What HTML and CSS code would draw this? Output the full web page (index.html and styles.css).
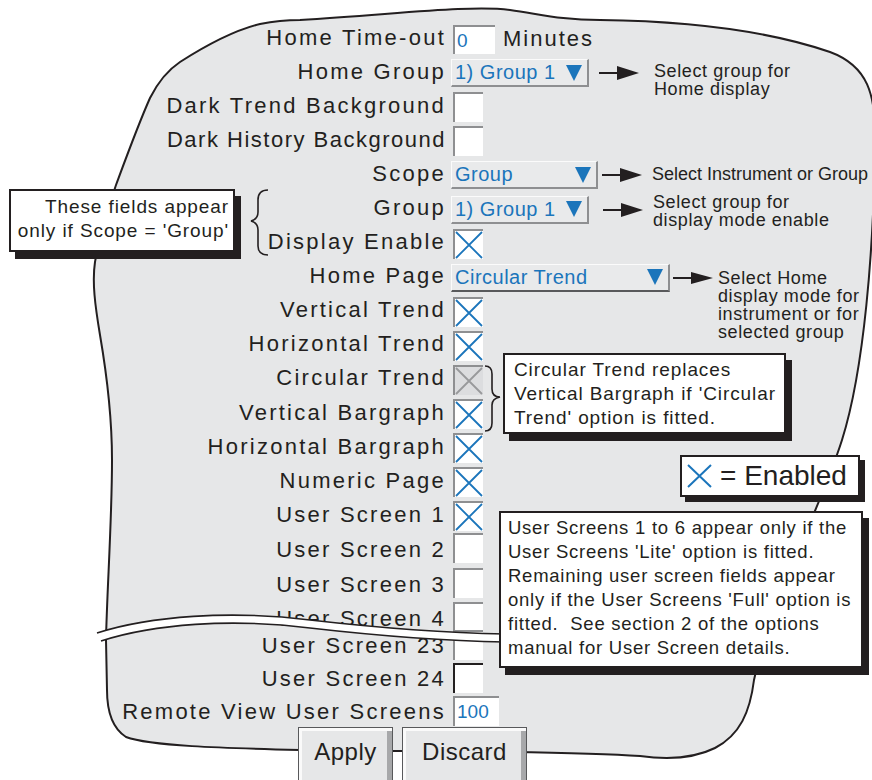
FILE: index.html
```html
<!DOCTYPE html>
<html lang="en">
<head>
  <meta charset="UTF-8">
  <title>Home Configuration</title>
  <link rel="stylesheet" href="styles.css">
</head>
<body>
  <div class="sheet">
    <!-- panel outline, drawn behind the form -->
    <svg class="outline" width="872" height="780" viewBox="0 0 872 780">
      <path class="blob" d="M300,20 C400,14 470,5 510,10 C540,14 560,20 600,20 C680,21 760,28 830,52 C868,66 876,95 875,140 C874,250 864,370 842,440 C826,490 805,530 792,570 C775,620 760,650 754,680 C750,712 740,735 715,748 C695,758 670,760 640,756 C560,750 400,752 300,750 C220,748 150,746 126,737 C112,728 107,712 107,690 L106,640 C107,590 112,520 112,460 C112,410 106,370 100,335 C95,305 92,282 95,262 C100,235 108,208 116,185 C126,158 138,125 150,98 C157,84 165,72 180,62 C205,46 235,30 260,24 C275,21 290,20 300,20 Z"/>
    </svg>

    <div class="form">
      <div class="row">
        <span class="label">Home Time-out</span>
        <span class="entry">0</span>
        <span class="unit">Minutes</span>
      </div>
      <div class="row row-home-group">
        <span class="label">Home Group</span>
        <span class="select select-group">1) Group 1
          <svg width="16" height="16" viewBox="0 0 16 16"><polygon points="0,0 16,0 8,16"/></svg>
        </span>
        <svg class="arrow" width="40" height="16" viewBox="0 0 40 16"><line x1="0" y1="8" x2="20" y2="8"/><polygon points="18,1 40,8 18,15"/></svg>
        <span class="note">Select group for<br>Home display</span>
      </div>
      <div class="row">
        <span class="label">Dark Trend Background</span>
        <span class="check"></span>
      </div>
      <div class="row">
        <span class="label snug">Dark History Background</span>
        <span class="check"></span>
      </div>
      <div class="row row-scope">
        <span class="label">Scope</span>
        <span class="select select-scope">Group
          <svg width="16" height="16" viewBox="0 0 16 16"><polygon points="0,0 16,0 8,16"/></svg>
        </span>
        <svg class="arrow" width="40" height="16" viewBox="0 0 40 16"><line x1="0" y1="8" x2="20" y2="8"/><polygon points="18,1 40,8 18,15"/></svg>
        <span class="note">Select Instrument or Group</span>
      </div>
      <div class="row row-group">
        <span class="label">Group</span>
        <span class="select select-group">1) Group 1
          <svg width="16" height="16" viewBox="0 0 16 16"><polygon points="0,0 16,0 8,16"/></svg>
        </span>
        <svg class="arrow" width="40" height="16" viewBox="0 0 40 16"><line x1="0" y1="8" x2="20" y2="8"/><polygon points="18,1 40,8 18,15"/></svg>
        <span class="note">Select group for<br>display mode enable</span>
      </div>
      <div class="row">
        <span class="label">Display Enable</span>
        <span class="check"><svg width="28" height="28" viewBox="0 0 28 28"><path d="M1 1L27 27M27 1L1 27"/></svg></span>
      </div>
      <div class="row row-home-page">
        <span class="label">Home Page</span>
        <span class="select select-page">Circular Trend
          <svg width="16" height="16" viewBox="0 0 16 16"><polygon points="0,0 16,0 8,16"/></svg>
        </span>
        <svg class="arrow" width="40" height="16" viewBox="0 0 40 16"><line x1="0" y1="8" x2="20" y2="8"/><polygon points="18,2 40,8 18,14"/></svg>
        <span class="note">Select Home<br>display mode for<br>instrument or for<br>selected group</span>
      </div>
      <div class="row">
        <span class="label">Vertical Trend</span>
        <span class="check"><svg width="28" height="28" viewBox="0 0 28 28"><path d="M1 1L27 27M27 1L1 27"/></svg></span>
      </div>
      <div class="row">
        <span class="label">Horizontal Trend</span>
        <span class="check"><svg width="28" height="28" viewBox="0 0 28 28"><path d="M1 1L27 27M27 1L1 27"/></svg></span>
      </div>
      <div class="row">
        <span class="label">Circular Trend</span>
        <span class="check off"><svg width="28" height="28" viewBox="0 0 28 28"><path d="M1 1L27 27M27 1L1 27"/></svg></span>
      </div>
      <div class="row">
        <span class="label">Vertical Bargraph</span>
        <span class="check"><svg width="28" height="28" viewBox="0 0 28 28"><path d="M1 1L27 27M27 1L1 27"/></svg></span>
      </div>
      <div class="row">
        <span class="label">Horizontal Bargraph</span>
        <span class="check"><svg width="28" height="28" viewBox="0 0 28 28"><path d="M1 1L27 27M27 1L1 27"/></svg></span>
      </div>
      <div class="row">
        <span class="label">Numeric Page</span>
        <span class="check"><svg width="28" height="28" viewBox="0 0 28 28"><path d="M1 1L27 27M27 1L1 27"/></svg></span>
      </div>
      <div class="row">
        <span class="label">User Screen 1</span>
        <span class="check"><svg width="28" height="28" viewBox="0 0 28 28"><path d="M1 1L27 27M27 1L1 27"/></svg></span>
      </div>
      <div class="row low">
        <span class="label">User Screen 2</span>
        <span class="check"></span>
      </div>
      <div class="row low">
        <span class="label">User Screen 3</span>
        <span class="check"></span>
      </div>
      <div class="row low">
        <span class="label">User Screen 4</span>
        <span class="check"></span>
      </div>
      <div class="row low tight resume">
        <span class="label">User Screen 23</span>
        <span class="check"></span>
      </div>
      <div class="row low tight">
        <span class="label">User Screen 24</span>
        <span class="check focus"></span>
      </div>
      <div class="row low tight">
        <span class="label">Remote View User Screens</span>
        <span class="entry wide">100</span>
      </div>
      <div class="actions">
        <div class="btn btn-apply">Apply</div>
        <div class="btn btn-discard">Discard</div>
      </div>
    </div>

    <!-- braces and the page break, drawn over the form -->
    <svg class="marks" width="872" height="780" viewBox="0 0 872 780">
      <path class="brace" d="M268,190 C261,190 258,193 258,200 L258,212 C258,218 255,220 251,221 C255,222 258,224 258,230 L258,246 C258,252 261,255 268,255"/>
      <path class="brace" d="M485,366 C490,366 492,369 492,374 L492,389 C492,394 495,397 500,397 C495,398 492,400 492,405 L492,423 C492,428 490,431 485,431"/>
      <path class="gap" d="M97,633 C150,616 230,610 310,620 C380,628 450,633 505,634 L505,642 C450,641 380,636 310,628 C230,618 154,624 101,641 Z"/>
      <path class="gap-edge" d="M97,633 C150,616 230,610 310,620 C380,628 450,633 505,634"/>
      <path class="gap-edge" d="M101,641 C154,624 230,618 310,628 C380,636 450,641 505,642"/>
    </svg>

    <div class="callout callout-scope">These fields appear<br>only if Scope = 'Group'</div>
    <div class="callout callout-circular">Circular Trend replaces<br>Vertical Bargraph if 'Circular<br>Trend' option is fitted.</div>
    <div class="callout callout-screens">User Screens 1 to 6 appear only if the<br>User Screens 'Lite' option is fitted.<br>Remaining user screen fields appear<br>only if the User Screens 'Full' option is<br>fitted.&nbsp; See section 2 of the options<br>manual for User Screen details.</div>
    <div class="callout legend">
      <svg width="25" height="24" viewBox="0 0 25 24"><path d="M1 1L24 23M24 1L1 23"/></svg>
      <span>= Enabled</span>
    </div>
  </div>
</body>
</html>
```

FILE: styles.css
```css
body {
  margin: 0;
  font-family: "Liberation Sans", Arial, sans-serif;
  color: #231f20;
  background-color: white;
}

.sheet {
  position: relative;
  width: 872px;
  height: 780px;
  overflow: hidden;
}

.outline,
.marks {
  position: absolute;
  left: 0;
  top: 0;
}

.blob {
  fill: #e6e7e8;
  stroke: #231f20;
  stroke-width: 2;
}

.brace {
  fill: none;
  stroke: #231f20;
  stroke-width: 1.6;
}

.gap {
  fill: white;
}

.gap-edge {
  fill: none;
  stroke: #231f20;
  stroke-width: 1.6;
}

/* Form rows */
.form {
  position: relative;
  padding-top: 22px;
}

.row {
  display: flex;
  align-items: center;
  height: 34.1px;
}

.row.tight {
  height: 33px;
}

.row.resume {
  margin-top: -6px;
}

.label {
  flex: none;
  width: 446px;
  box-sizing: border-box;
  padding-bottom: 3px;
  text-align: right;
  font-size: 22px;
  letter-spacing: 2.25px;
  white-space: nowrap;
}

.label.snug {
  letter-spacing: 1.5px;
}

.row.low .label {
  padding-bottom: 0;
}

.row.low .check,
.row.low .entry {
  align-self: flex-start;
}

.unit {
  margin-left: 8px;
  font-size: 22px;
  letter-spacing: 2px;
}

.entry {
  width: 42px;
  height: 29px;
  margin-left: 7px;
  box-sizing: border-box;
  padding-left: 2px;
  background: white;
  border-top: 2px solid #8e8f91;
  border-left: 2px solid #8e8f91;
  color: #1b75bb;
  font-size: 19px;
  line-height: 27px;
}

.entry.wide {
  width: 46px;
  height: 30px;
}

.check {
  flex: none;
  width: 30px;
  height: 30px;
  margin-left: 7px;
  box-sizing: border-box;
  background: white;
  border-top: 2px solid #8e8f91;
  border-left: 2px solid #8e8f91;
}

.check svg {
  display: block;
}

.check path {
  stroke: #1b75bb;
  stroke-width: 1.8;
}

.check.off {
  background: #dcdddf;
}

.check.off path {
  stroke: #98999b;
}

.check.focus {
  border-color: #231f20;
}

.select {
  flex: none;
  display: flex;
  align-items: center;
  justify-content: space-between;
  height: 28px;
  margin-left: 5px;
  box-sizing: border-box;
  padding: 0 5px 0 3px;
  background: #e9eaeb;
  border-top: 1px solid #fbfbfb;
  border-left: 1px solid #fbfbfb;
  border-right: 2px solid #8e8f91;
  border-bottom: 2px solid #8e8f91;
  color: #1b75bb;
  font-size: 20px;
  letter-spacing: 0.5px;
  white-space: nowrap;
}

.select svg {
  fill: #1b75bb;
}

.select-group {
  width: 138px;
}

.select-scope {
  width: 147px;
}

.select-page {
  width: 219px;
  border-bottom-color: #58595b;
}

.arrow {
  flex: none;
}

.arrow line {
  stroke: #231f20;
  stroke-width: 2;
}

.arrow polygon {
  fill: #231f20;
}

.note {
  align-self: flex-start;
  font-size: 18px;
  line-height: 18px;
  letter-spacing: 0.6px;
  white-space: nowrap;
}

.row-home-group .arrow { margin-left: 10px; }
.row-home-group .note { margin: 6px 0 0 15px; }

.row-scope .arrow { margin-left: 4px; }
.row-scope .note { margin: 7px 0 0 10px; letter-spacing: 0; }

.row-group .arrow { margin-left: 14px; }
.row-group .note { margin: 1px 0 0 10px; }

.row-home-page .arrow { margin-left: 3px; }
.row-home-page .note { margin: 8px 0 0 5px; }

/* Buttons */
.actions {
  display: flex;
  gap: 9px;
  margin-top: -2px;
  padding-left: 298px;
}

.btn {
  height: 60px;
  box-sizing: border-box;
  padding-top: 12px;
  background: #e6e7e8;
  border: 1px solid #58595b;
  box-shadow: inset 3px 3px 0 #fafafa, inset -5px -5px 0 #a7a8aa;
  text-align: center;
  font-size: 24px;
  line-height: 24px;
  letter-spacing: 0.5px;
}

.btn-apply {
  width: 95px;
}

.btn-discard {
  width: 125px;
}

/* Callout boxes */
.callout {
  position: absolute;
  box-sizing: border-box;
  background: white;
  border: 2px solid #231f20;
  box-shadow: 6px 7px 0 #231f20;
  font-size: 19px;
  line-height: 24px;
  letter-spacing: 0.9px;
  white-space: nowrap;
}

.callout-scope {
  left: 9px;
  top: 189px;
  width: 226px;
  height: 63px;
  padding: 4px 4px 0 0;
  text-align: right;
}

.callout-circular {
  left: 503px;
  top: 353px;
  width: 283px;
  height: 81px;
  padding: 3px 0 0 9px;
}

.callout-screens {
  left: 499px;
  top: 511px;
  width: 364px;
  height: 157px;
  padding: 3px 0 0 7px;
  font-size: 18.5px;
  letter-spacing: 0.75px;
}

.legend {
  left: 680px;
  top: 455px;
  width: 180px;
  height: 42px;
  display: flex;
  align-items: center;
  padding-left: 5px;
  box-shadow: 5px 5px 0 #231f20;
  font-size: 28px;
  letter-spacing: 0;
}

.legend path {
  stroke: #1b75bb;
  stroke-width: 2;
}

.legend span {
  margin-left: 8px;
}
```
